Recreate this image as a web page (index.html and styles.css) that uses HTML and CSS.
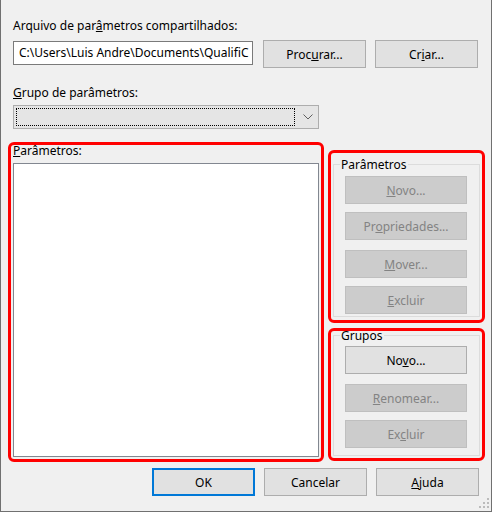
FILE: index.html
```html
<!DOCTYPE html>
<html>
<head>
    <meta charset="utf-8">
    <title>Parâmetros compartilhados</title>
    <link rel="stylesheet" href="styles.css">
</head>
<body>
    <div class="janela">
        <div class="rotulo">Arquivo de par<u>â</u>metros compartilhados:</div>
        <div class="linha-arquivo">
            <div class="caixa-texto">C:\Users\Luis Andre\Documents\QualifiC</div>
            <button class="botao">Proc<u>u</u>rar...</button>
            <button class="botao">Cr<u>i</u>ar...</button>
        </div>
        <div class="rotulo rotulo-grupo"><u>G</u>rupo de parâmetros:</div>
        <div class="combo">
            <div class="combo-foco"></div>
            <svg class="seta" width="10" height="6" viewBox="0 0 10 6">
                <polyline points="0.5,0.5 5,5 9.5,0.5" fill="none" stroke="#5f5f5f" stroke-width="1"/>
            </svg>
        </div>

        <div class="principal">
            <div class="destaque area-lista">
                <div class="rotulo"><u>P</u>arâmetros:</div>
                <div class="lista"></div>
            </div>
            <div class="coluna-direita">
                <div class="destaque caixa-parametros">
                    <fieldset class="grupo">
                        <legend>Parâmetros</legend>
                        <button class="botao largo b-novo" disabled><u>N</u>ovo...</button>
                        <button class="botao largo b-prop" disabled>Pr<u>o</u>priedades...</button>
                        <button class="botao largo b-mover" disabled><u>M</u>over...</button>
                        <button class="botao largo b-excluir" disabled><u>E</u>xcluir</button>
                    </fieldset>
                </div>
                <div class="destaque caixa-grupos">
                    <fieldset class="grupo">
                        <legend>Grupos</legend>
                        <button class="botao largo g-novo">No<u>v</u>o...</button>
                        <button class="botao largo g-renomear" disabled><u>R</u>enomear...</button>
                        <button class="botao largo g-excluir" disabled>Ex<u>c</u>luir</button>
                    </fieldset>
                </div>
            </div>
        </div>

        <div class="rodape">
            <button class="botao padrao">OK</button>
            <button class="botao">Cancelar</button>
            <button class="botao"><u>A</u>juda</button>
        </div>

        <!-- alça de redimensionar -->
        <svg class="alca" width="12" height="12" viewBox="0 0 12 12">
            <rect x="9" y="1" width="2" height="2" fill="#bcbcbc"/>
            <rect x="5" y="5" width="2" height="2" fill="#bcbcbc"/>
            <rect x="9" y="5" width="2" height="2" fill="#bcbcbc"/>
            <rect x="1" y="9" width="2" height="2" fill="#bcbcbc"/>
            <rect x="5" y="9" width="2" height="2" fill="#bcbcbc"/>
            <rect x="9" y="9" width="2" height="2" fill="#bcbcbc"/>
        </svg>
    </div>
</body>
</html>
```

FILE: styles.css
```css
/* Janela de parametros compartilhados */
* {
    box-sizing: border-box;
}
body {
    margin: 0;
    background: #f0f0f0;
    font-family: "Noto Sans", "Liberation Sans", sans-serif;
    font-size: 12px;
    color: #000;
}
u {
    text-decoration-thickness: 1px;
    text-underline-offset: 1px;
}
.janela {
    position: relative;
    width: 492px;
    height: 512px;
    border-left: 1px solid #707070;
    border-right: 1px solid #707070;
    border-bottom: 1px solid #707070;
    padding: 18px 12px 0 12px;
}
.rotulo {
    height: 15px;
    line-height: 15px;
    white-space: nowrap;
}
.linha-arquivo {
    display: flex;
    margin-top: 7px;
}
.caixa-texto {
    width: 240px;
    height: 24px;
    margin-top: 1px;
    margin-right: 10px;
    padding-left: 5px;
    border: 1px solid #7a7a7a;
    background: #fff;
    line-height: 22px;
    white-space: nowrap;
    overflow: hidden;
}
.botao {
    width: 103px;
    height: 28px;
    padding: 0;
    border: 1px solid #adadad;
    background: #e1e1e1;
    font: inherit;
    color: #000;
}
.linha-arquivo .botao + .botao {
    margin-left: 9px;
}
.botao:disabled {
    background: #cccccc;
    border-color: #bfbfbf;
    color: #838383;
}
.botao.padrao {
    border: 2px solid #0078d7;
}
.rotulo-grupo {
    margin-top: 17px;
}
.combo {
    display: flex;
    align-items: center;
    width: 306px;
    height: 24px;
    margin-top: 5px;
    padding-left: 2px;
    border: 1px solid #adadad;
    background: #e5e5e5;
}
.combo-foco {
    width: 279px;
    height: 18px;
    border: 1px dotted #000;
}
.seta {
    margin-left: 8px;
}
.principal {
    display: flex;
    align-items: flex-start;
    margin: 13px -6px 0 -5px;
}
/* contornos vermelhos de destaque */
.destaque {
    border: 3px solid #ff0000;
    border-radius: 6px;
}
.area-lista {
    width: 316px;
    height: 320px;
    padding: 0 1px 0 2px;
}
.area-lista .rotulo {
    margin-top: -2px;
}
.lista {
    width: 306px;
    height: 294px;
    margin-top: 5px;
    border: 1px solid #828790;
    background: #fff;
}
.coluna-direita {
    width: 157px;
    margin-left: 4px;
    margin-top: 8px;
}
.caixa-parametros {
    height: 173px;
    padding: 0 2px;
}
.caixa-grupos {
    height: 133px;
    margin-top: 5px;
    padding: 0 2px;
}
.grupo {
    margin: 0;
    padding: 0;
    min-width: 0;
    border: 1px solid #dcdcdc;
}
.caixa-parametros .grupo {
    margin-top: 4px;
    height: 160px;
}
.caixa-grupos .grupo {
    margin-top: -3px;
    height: 128px;
}
.grupo legend {
    margin-left: 6px;
    padding: 0 1px;
    line-height: 15px;
}
.botao.largo {
    display: block;
    width: 122px;
    margin-left: 11px;
}
.b-novo { margin-top: 4px; }
.b-prop { margin-top: 8px; }
.b-mover { margin-top: 10px; }
.b-excluir { margin-top: 8px; }
.g-novo { margin-top: 3px; }
.g-renomear { margin-top: 10px; }
.g-excluir { margin-top: 8px; }
.rodape {
    display: flex;
    justify-content: flex-end;
    gap: 9px;
    margin-top: 6px;
}
.alca {
    position: absolute;
    right: 1px;
    bottom: 2px;
}
```
